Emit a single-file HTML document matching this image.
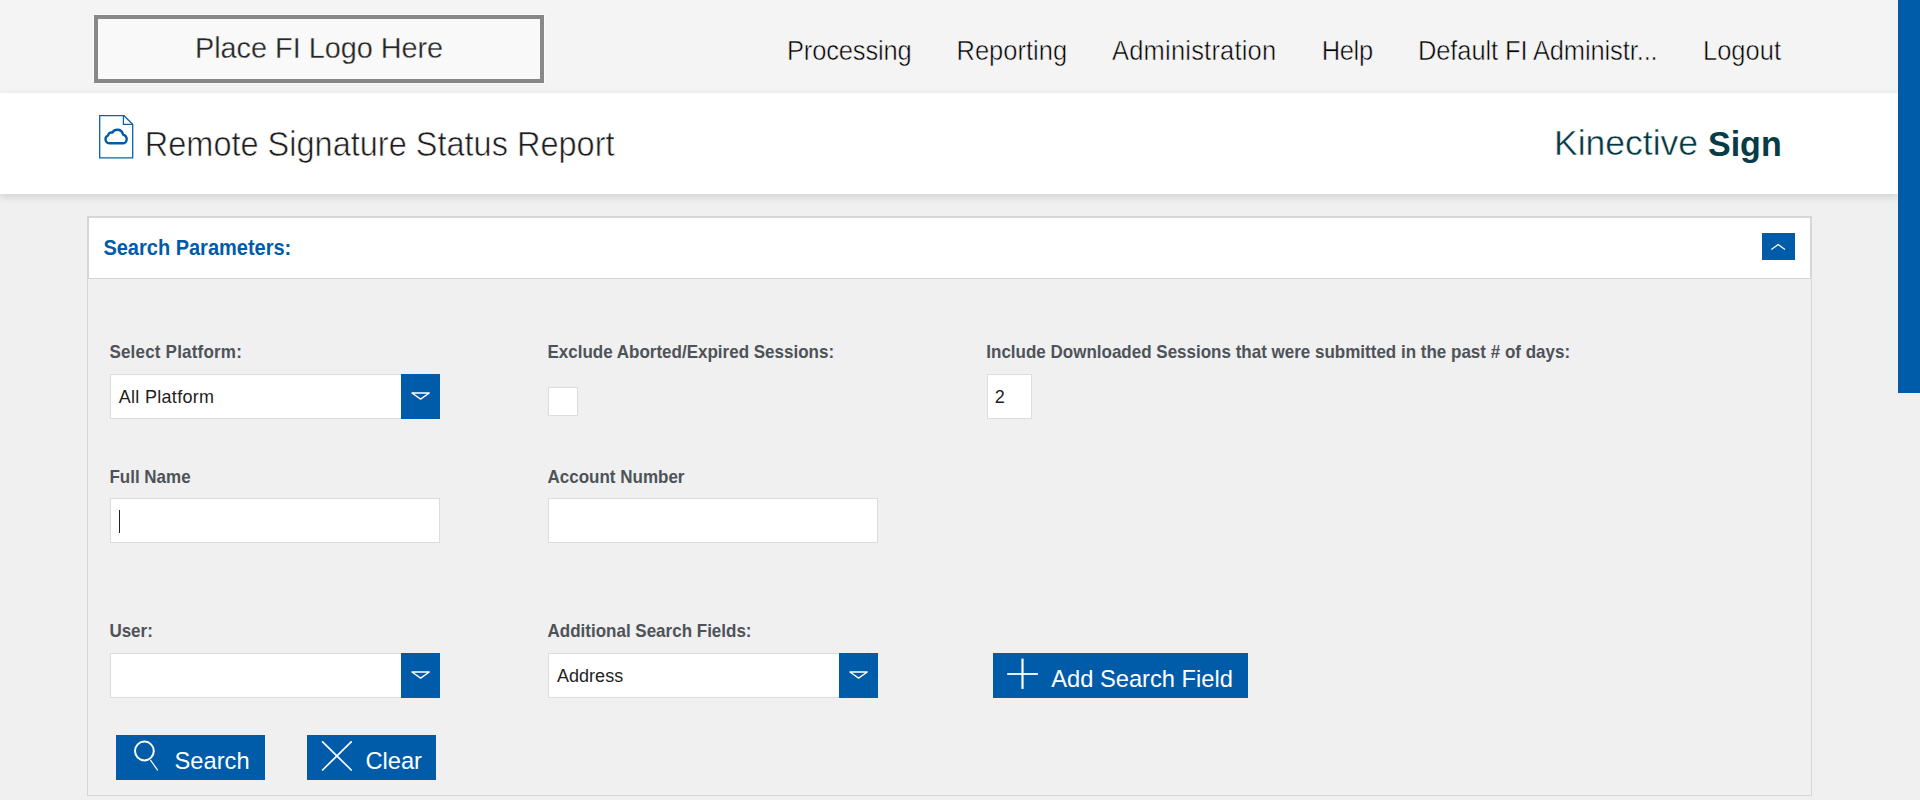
<!DOCTYPE html>
<html>
<head>
<meta charset="utf-8">
<style>
html,body{margin:0;padding:0;}
body{width:1920px;height:800px;overflow:hidden;position:relative;background:#f0f0f0;font-family:"Liberation Sans",sans-serif;}
.a{position:absolute;white-space:nowrap;}
.sy{transform-origin:left 84.65%;}
.topbar{left:0;top:0;width:1898px;height:93px;background:#f4f4f4;}
.logo{left:94px;top:15px;width:442px;height:60px;border:4px solid #888;background:#f9f9f9;outline:1px solid #fbfbfb;}
.nav{font-size:25.5px;line-height:25.5px;color:#000;top:39px;-webkit-text-stroke:0.5px #f4f4f4;transform:scaleY(1.08);transform-origin:left 84.65%;}
.banner{left:0;top:93px;width:1898px;height:101px;background:#fff;box-shadow:0 3px 8px rgba(0,0,0,0.13);}
.scroll{left:1898px;top:0;width:22px;height:393px;background:#005ca8;}
.panel{left:87px;top:216px;width:1723px;height:578px;border:1px solid #d6d6d6;background:#f0f0f0;}
.phead{left:87px;top:216px;width:1721px;height:60px;border:2px solid #d6d6d6;border-bottom-width:1px;background:#fff;}
.lbl{font-size:17px;line-height:17px;font-weight:700;color:#4e5359;transform:scaleY(1.08);transform-origin:left 84.65%;}
.inp{background:#fff;border:1px solid #dcdcdc;box-sizing:border-box;}
.val{font-size:18px;line-height:18px;color:#1e1e1e;transform:scaleY(1.025);transform-origin:left 84.65%;}
.btnb{background:#005ba8;}
.btxt{font-size:23.7px;line-height:23.7px;color:#fff;transform:scaleY(1.02);transform-origin:left 84.65%;}
</style>
</head>
<body>
<div class="a topbar"></div>
<div class="a logo"></div>
<div class="a" style="left:195px;top:34px;font-size:28.8px;line-height:28.8px;color:#262626;-webkit-text-stroke:0.3px #f9f9f9;">Place FI Logo Here</div>

<div class="a nav" style="left:787px;letter-spacing:-0.15px;">Processing</div>
<div class="a nav" style="left:956.5px;">Reporting</div>
<div class="a nav" style="left:1112px;letter-spacing:0.2px;">Administration</div>
<div class="a nav" style="left:1321.7px;letter-spacing:-0.35px;">Help</div>
<div class="a nav" style="left:1418px;letter-spacing:-0.12px;">Default FI Administr...</div>
<div class="a nav" style="left:1703px;">Logout</div>

<div class="a banner"></div>
<div class="a" style="left:144.8px;top:129px;font-size:32.5px;line-height:32.5px;color:#1e1e1e;-webkit-text-stroke:0.55px #fff;transform:scaleY(1.06);transform-origin:left 84.65%;">Remote Signature Status Report</div>
<div class="a" style="left:1554px;top:125.5px;font-size:35.5px;line-height:35.5px;color:#033844;-webkit-text-stroke:0.45px #fff;">Kinective</div>
<div class="a" style="left:1708px;top:126.8px;font-size:34px;line-height:34px;font-weight:700;color:#063b47;transform:scaleY(1.055);transform-origin:left 84.65%;">Sign</div>

<div class="a scroll"></div>

<div class="a panel"></div>
<div class="a phead"></div>
<div class="a" style="left:103.4px;top:237.9px;font-size:20px;line-height:20px;font-weight:700;color:#005ba8;transform:scaleY(1.07);transform-origin:left 84.65%;">Search Parameters:</div>

<!-- row 1 -->
<div class="a lbl" style="left:109.4px;top:344.1px;letter-spacing:0.2px;">Select Platform:</div>
<div class="a lbl" style="left:547.5px;top:344.1px;">Exclude Aborted/Expired Sessions:</div>
<div class="a lbl" style="left:986.3px;top:344.1px;">Include Downloaded Sessions that were submitted in the past # of days:</div>

<div class="a inp" style="left:110px;top:374px;width:330px;height:45px;"></div>
<div class="a val" style="left:118.75px;top:388.1px;letter-spacing:0.3px;">All Platform</div>
<div class="a btnb" style="left:401px;top:374px;width:39px;height:45px;"></div>

<div class="a inp" style="left:548px;top:387px;width:30px;height:29px;"></div>
<div class="a inp" style="left:987px;top:374px;width:45px;height:45px;"></div>
<div class="a val" style="left:994.8px;top:388.1px;">2</div>

<!-- row 2 -->
<div class="a lbl" style="left:109.4px;top:468.9px;">Full Name</div>
<div class="a lbl" style="left:547.5px;top:468.9px;">Account Number</div>
<div class="a inp" style="left:110px;top:498px;width:330px;height:45px;"></div>
<div class="a" style="left:119px;top:510px;width:1px;height:23px;background:#222;"></div>
<div class="a inp" style="left:548px;top:498px;width:330px;height:45px;"></div>

<!-- row 3 -->
<div class="a lbl" style="left:109.4px;top:623.2px;">User:</div>
<div class="a lbl" style="left:547.5px;top:623.2px;">Additional Search Fields:</div>
<div class="a inp" style="left:110px;top:653px;width:330px;height:45px;"></div>
<div class="a btnb" style="left:401px;top:653px;width:39px;height:45px;"></div>
<div class="a inp" style="left:548px;top:653px;width:330px;height:45px;"></div>
<div class="a val" style="left:557.1px;top:667.1px;">Address</div>
<div class="a btnb" style="left:839px;top:653px;width:39px;height:45px;"></div>

<div class="a btnb" style="left:993px;top:653px;width:255px;height:45px;"></div>
<div class="a btxt" style="left:1051.2px;top:667.9px;">Add Search Field</div>

<!-- buttons -->
<div class="a btnb" style="left:116px;top:735px;width:149px;height:45px;"></div>
<div class="a btxt" style="left:174.5px;top:749.9px;">Search</div>
<div class="a btnb" style="left:307px;top:735px;width:129px;height:45px;"></div>
<div class="a btxt" style="left:365.4px;top:749.9px;">Clear</div>

<svg class="a" style="left:0;top:0;" width="1920" height="800" viewBox="0 0 1920 800">
  <!-- document icon -->
  <g fill="none" stroke="#0b60ae" stroke-linejoin="miter">
    <path d="M99.7,115.7 H124 L132.7,124.3 V157.8 H99.7 Z" stroke-width="1.3"/>
    <path d="M123.4,115.7 V124.3 H132.7" stroke-width="1.2"/>
    <path d="M109.3,143.3 C106.8,143.3 105.5,141.2 105.5,139.3 C105.5,137.4 106.6,136 108,135.6 C108.4,133.2 110.2,132 112.3,132.6 C113.4,130.7 115.2,129.8 117.3,129.8 C120.3,129.8 122.5,132 123,134.6 C125.2,135.2 126.7,137.2 126.7,139.2 C126.7,141.5 125,143.3 122.8,143.3 Z" stroke-width="2.4" stroke-linejoin="round" stroke="#005ba8"/>
  </g>
  <!-- collapse button -->
  <rect x="1762" y="233" width="33" height="27" fill="#005ba8"/>
  <path d="M1771.3,249.6 L1778.2,244.6 L1785,249.6" fill="none" stroke="#fff" stroke-width="1.25"/>
  <!-- dropdown triangles -->
  <g fill="none" stroke="#fff" stroke-width="1.3" stroke-linejoin="round">
    <path d="M411.9,393 H429.3 L420.6,399.1 Z"/>
    <path d="M411.9,672 H429.3 L420.6,678.1 Z"/>
    <path d="M849.9,672 H867.3 L858.6,678.1 Z"/>
  </g>
  <!-- search icon -->
  <g fill="none" stroke="#fff">
    <circle cx="144.4" cy="751" r="9.4" stroke-width="2"/>
    <path d="M150.3,759.8 L157.7,770.4" stroke-width="1.2"/>
  </g>
  <!-- clear icon -->
  <g fill="none" stroke="#fff" stroke-width="1.7" stroke-linecap="round">
    <path d="M322.6,741.8 L351.2,770"/>
    <path d="M351.2,741.8 L322.6,770"/>
  </g>
  <!-- plus icon -->
  <g fill="none" stroke="#fff">
    <path d="M1022.5,658.6 V688.9" stroke-width="2.2"/>
    <path d="M1007.2,674 H1037.9" stroke-width="1.8"/>
  </g>
</svg>

</body>
</html>
